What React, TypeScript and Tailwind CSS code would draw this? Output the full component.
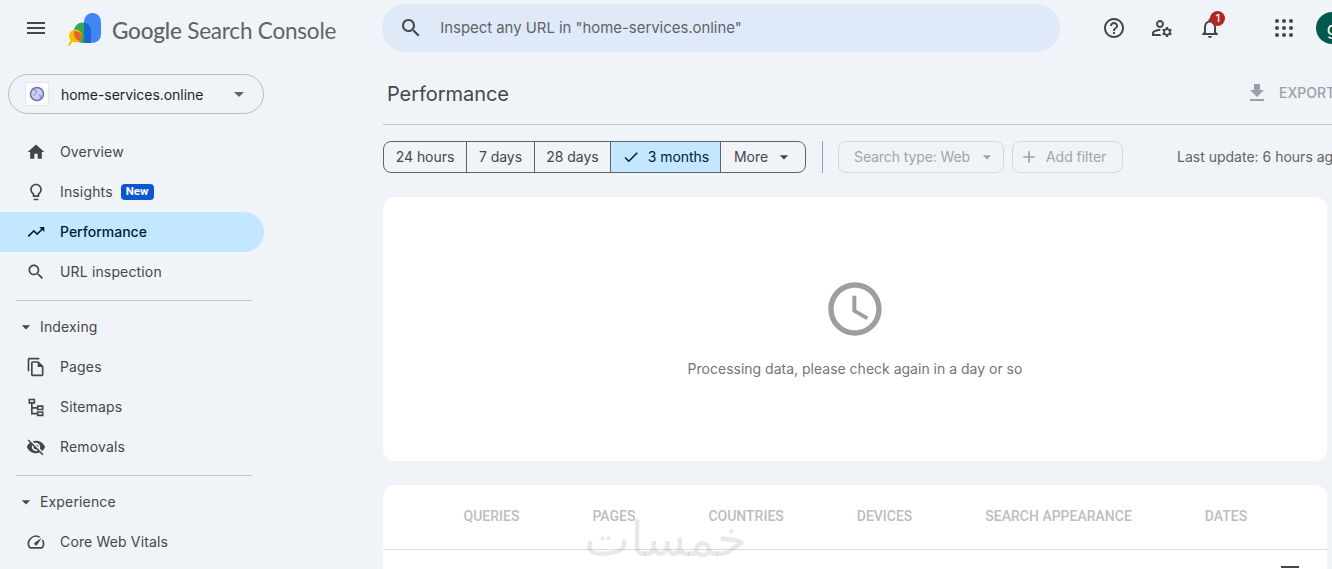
import React from "react";

const P = {
  menu: "M3 18h18v-2H3v2zm0-5h18v-2H3v2zm0-7v2h18V6H3z",
  help: "M11 18h2v-2h-2v2zm1-16C6.48 2 2 6.48 2 12s4.48 10 10 10 10-4.48 10-10S17.52 2 12 2zm0 18c-4.41 0-8-3.59-8-8s3.59-8 8-8 8 3.59 8 8-3.59 8-8 8zm0-14c-2.21 0-4 1.79-4 4h2c0-1.1.9-2 2-2s2 .9 2 2c0 2-3 1.75-3 5h2c0-2.25 3-2.5 3-5 0-2.21-1.79-4-4-4z",
  manage: "M4,18v-0.65c0-0.34,0.16-0.66,0.41-0.81C6.1,15.53,8.03,15,10,15c0.03,0,0.05,0,0.08,0.01c0.1-0.7,0.3-1.37,0.59-1.98 C10.45,13.01,10.23,13,10,13c-2.42,0-4.68,0.67-6.61,1.82C2.51,15.34,2,16.32,2,17.35V20h9.26c-0.42-0.6-0.75-1.28-0.97-2H4z M10,12c2.21,0,4-1.79,4-4s-1.79-4-4-4C7.79,4,6,5.79,6,8S7.79,12,10,12z M10,6c1.1,0,2,0.9,2,2s-0.9,2-2,2 c-1.1,0-2-0.9-2-2S8.9,6,10,6z M20.75,16c0-0.22-0.03-0.42-0.06-0.63l1.14-1.01l-1-1.73l-1.45,0.49c-0.32-0.27-0.68-0.48-1.08-0.63L18,11h-2l-0.3,1.49c-0.4,0.15-0.76,0.36-1.08,0.63l-1.45-0.49l-1,1.73l1.14,1.01c-0.03,0.21-0.06,0.41-0.06,0.63s0.03,0.42,0.06,0.63l-1.14,1.01l1,1.73l1.45-0.49c0.32,0.27,0.68,0.48,1.08,0.63L16,21h2l0.3-1.49c0.4-0.15,0.76-0.36,1.08-0.63l1.45,0.49l1-1.73l-1.14-1.01C20.72,16.42,20.75,16.22,20.75,16z M17,18c-1.1,0-2-0.9-2-2s0.9-2,2-2s2,0.9,2,2S18.1,18,17,18z",
  bell: "M12 22c1.1 0 2-.9 2-2h-4c0 1.1.9 2 2 2zm6-6v-5c0-3.07-1.63-5.64-4.5-6.32V4c0-.83-.67-1.5-1.5-1.5s-1.5.67-1.5 1.5v.68C7.64 5.36 6 7.92 6 11v5l-2 2v1h16v-1l-2-2zm-2 1H8v-6c0-2.48 1.51-4.5 4-4.5s4 2.02 4 4.5v6z",
  search: "M15.5 14h-.79l-.28-.27C15.41 12.59 16 11.11 16 9.5 16 5.91 13.09 3 9.5 3S3 5.91 3 9.5 5.91 16 9.5 16c1.61 0 3.09-.59 4.23-1.57l.27.28v.79l5 4.99L20.49 19l-4.99-5zm-6 0C7.01 14 5 11.99 5 9.5S7.01 5 9.5 5 14 7.01 14 9.5 11.99 14 9.5 14z",
  home: "M10 20v-6h4v6h5v-8h3L12 3 2 12h3v8z",
  bulb: "M9 21c0 .55.45 1 1 1h4c.55 0 1-.45 1-1v-1H9v1zm3-19C8.14 2 5 5.14 5 9c0 2.38 1.19 4.47 3 5.74V17c0 .55.45 1 1 1h6c.55 0 1-.45 1-1v-2.26c1.81-1.27 3-3.36 3-5.74 0-3.86-3.14-7-7-7zm2.85 11.1l-.85.6V16h-4v-2.3l-.85-.6C7.8 12.16 7 10.63 7 9c0-2.76 2.24-5 5-5s5 2.24 5 5c0 1.63-.8 3.16-2.15 4.1z",
  trend: "M16 6l2.29 2.29-4.88 4.88-4-4L2 16.59 3.41 18l6-6 4 4 6.3-6.29L22 12V6z",
  pages: "M16 1H4c-1.1 0-2 .9-2 2v14h2V3h12V1zm-1 4H8c-1.1 0-1.99.9-1.99 2L6 21c0 1.1.89 2 1.99 2H19c1.1 0 2-.9 2-2V11l-6-6zM8 21V7h6v5h5v9H8z",
  sitemap: "M3 2h8v6H8v4h5v-2h8v6h-8v-2H8v5h5v-2h8v6h-8v-2H6V8H3V2zm2 2v2h4V4H5zm10 8v2h4v-2h-4zm0 7v2h4v-2h-4z",
  eyeoff: "M12 7c2.76 0 5 2.24 5 5 0 .65-.13 1.26-.36 1.83l2.92 2.92c1.51-1.26 2.7-2.89 3.43-4.75-1.73-4.39-6-7.5-11-7.5-1.4 0-2.74.25-3.98.7l2.16 2.16C10.74 7.13 11.35 7 12 7zM2 4.27l2.28 2.28.46.46C3.08 8.3 1.78 10.02 1 12c1.73 4.39 6 7.5 11 7.5 1.55 0 3.03-.3 4.38-.84l.42.42L19.73 22 21 20.73 3.27 3 2 4.27zM7.53 9.8l1.55 1.55c-.05.21-.08.43-.08.65 0 1.66 1.34 3 3 3 .22 0 .44-.03.65-.08l1.55 1.55c-.67.33-1.41.53-2.2.53-2.76 0-5-2.24-5-5 0-.79.2-1.53.53-2.2zm4.31-.78l3.15 3.15.02-.16c0-1.66-1.34-3-3-3l-.17.01z",
  speed: "M20.38 8.57l-1.23 1.85a8 8 0 0 1-.22 7.58H5.07A8 8 0 0 1 15.58 6.85l1.85-1.23A10 10 0 0 0 3.35 19a2 2 0 0 0 1.72 1h13.85a2 2 0 0 0 1.74-1 10 10 0 0 0-.27-10.44zm-9.79 6.84a2 2 0 0 0 2.83 0l5.66-8.49-8.49 5.66a2 2 0 0 0 0 2.83z",
  download: "M19 9h-4V3H9v6H5l7 7 7-7zM5 18v2h14v-2H5z",
  check: "M9 16.17L4.83 12l-1.41 1.41L9 19 21 7l-1.41-1.41z",
  add: "M19 13h-6v6h-2v-6H5v-2h6V5h2v6h6v2z",
  clock: "M11.99 2C6.47 2 2 6.48 2 12s4.47 10 9.99 10C17.52 22 22 17.52 22 12S17.52 2 11.99 2zM12 20c-4.42 0-8-3.58-8-8s3.58-8 8-8 8 3.58 8 8-3.58 8-8 8zm.5-13H11v6l5.25 3.15.75-1.23-4.5-2.67z",
  filter: "M10 18h4v-2h-4v2zM3 6v2h18V6H3zm3 7h12v-2H6v2z",
  arrow: "M7 10l5 5 5-5z",
};

function Icon({ d, className }: { d: string; className?: string }) {
  return (
    <svg viewBox="0 0 24 24" fill="currentColor" className={className}>
      <path d={d} />
    </svg>
  );
}

function NavItem({ icon, label, active, badge }: { icon: string; label: string; active?: boolean; badge?: boolean }) {
  return (
    <div
      className={`flex h-10 w-[264px] items-center pl-[26px] rounded-r-[20px] ${
        active ? "bg-[#c2e7ff] text-[#001d35]" : "text-[#444746]"
      }`}
    >
      <Icon d={icon} className="h-5 w-5" />
      <span className={`ml-[14px] pb-[2px] text-[14px] ${active ? "font-medium" : "tracking-[0.15px]"}`}>{label}</span>
      {badge && (
        <span className="ml-2 flex h-4 items-center rounded-[4px] bg-[#0b57d0] px-[5px] text-[11.500px] font-bold text-white font-['Roboto',sans-serif]">
          New
        </span>
      )}
    </div>
  );
}

function Section({ label }: { label: string }) {
  return (
    <div className="flex h-10 items-center pl-[16px] text-[#444746]">
      <Icon d={P.arrow} className="h-5 w-5" />
      <span className="ml-1 pb-[2px] text-[14px] tracking-[0.15px]">{label}</span>
    </div>
  );
}

function Logo() {
  return (
    <svg viewBox="0 0 36 36" className="h-9 w-9">
      <rect x="16" y="1" width="17" height="30" rx="8.5" fill="#4285f4" />
      <path d="M6 19a8.5 8.5 0 0 1 17 0v12H14.5A8.5 8.5 0 0 1 6 22.5z" fill="#34a853" />
      <path d="M16 10.4a8.5 8.5 0 0 1 7 8.6v12h-7z" fill="#1967d2" />
      <circle cx="7.5" cy="24" r="6.5" fill="#fbbc04" />
      <path d="M6 19.500a8.500 8.500 0 0 0 .1 3A8.500 8.500 0 0 0 11 29a6.500 6.500 0 0 0 3-5 6.500 6.500 0 0 0-8-4.500z" fill="#e8622c" />
      <path d="M2.800 28 L4.500 29.500 L2 33.500 L0.200 33.800 L0.300 32z" fill="#fbbc04" />
    </svg>
  );
}

function Top() {
  return (
    <div className="flex h-14 w-[1360px] shrink-0 items-center">
      <Icon d={P.menu} className="ml-6 h-6 w-6 text-[#444746]" />
      <div className="ml-[20px] mt-[3px]"><Logo /></div>
      <span className="ml-[8px] mt-[6px] whitespace-nowrap text-[22.500px] text-[#5f6368] tracking-[-0.2px] font-['Lato',sans-serif]">
        <span className="font-medium">Google</span> Search Console
      </span>
      <div className="ml-[46px] flex h-12 w-[678px] items-center rounded-3xl bg-[#dfe9f8]">
        <Icon d={P.search} className="ml-[17px] h-6 w-6 text-[#444746]" />
        <span className="ml-[17px] text-[14.900px] text-[#5f6368]">Inspect any URL in "home-services.online"</span>
      </div>
      <Icon d={P.help} className="ml-[42px] h-6 w-6 text-[#444746]" />
      <Icon d={P.manage} className="ml-6 h-6 w-6 text-[#444746]" />
      <div className="relative ml-6 h-6 w-6">
        <Icon d={P.bell} className="h-6 w-6 text-[#444746]" />
        <span className="absolute -right-[3px] -top-[5px] flex h-[15px] w-[15px] items-center justify-center rounded-full bg-[#b3261e] text-[11px] font-medium text-white">
          1
        </span>
      </div>
      <svg viewBox="0 0 24 24" fill="#444746" className="ml-[50px] h-6 w-6">
        {[5, 12, 19].flatMap((y) =>
          [5, 12, 19].map((x) => <circle key={`${x}-${y}`} cx={x} cy={y} r="2" />)
        )}
      </svg>
      <div className="ml-5 flex h-8 w-8 shrink-0 items-center justify-center rounded-full bg-[#00594a] text-[18px] text-white">
        g
      </div>
    </div>
  );
}

function Sidebar() {
  return (
    <aside className="w-[383px] shrink-0">
      <div className="ml-2 mt-[18px] flex h-10 w-[256px] items-center rounded-[20px] border border-[#b9bdc1] pl-4">
        <div className="flex h-[24px] w-[24px] items-center justify-center border border-[#e3e6ea] bg-white">
          <svg viewBox="0 0 16 16" className="h-4 w-4">
            <circle cx="8" cy="8" r="6.500" fill="#c9d0ee" stroke="#6d72b8" strokeWidth="1.500" />
            <path d="M5 4c2 0 3 1 2.500 2.500S5 8 5 9.500M10 9c1.500 0 2 1 1 3" stroke="#6d72b8" strokeWidth="1" fill="none" />
          </svg>
        </div>
        <span className="ml-3 text-[14px] tracking-[-0.05px] text-[#1f1f1f]">home-services.online</span>
        <Icon d={P.arrow} className="ml-auto mr-3 h-6 w-6 text-[#5f6368]" />
      </div>
      <div className="mt-[18px]">
        <NavItem icon={P.home} label="Overview" />
        <NavItem icon={P.bulb} label="Insights" badge />
        <NavItem icon={P.trend} label="Performance" active />
        <NavItem icon={P.search} label="URL inspection" />
      </div>
      <div className="mx-4 mt-2 h-px w-[236px] bg-[#c4c7c9]" />
      <div className="mt-[6px]">
        <Section label="Indexing" />
        <NavItem icon={P.pages} label="Pages" />
        <NavItem icon={P.sitemap} label="Sitemaps" />
        <NavItem icon={P.eyeoff} label="Removals" />
      </div>
      <div className="mx-4 mt-2 h-px w-[236px] bg-[#c4c7c9]" />
      <div className="mt-[6px]">
        <Section label="Experience" />
        <NavItem icon={P.speed} label="Core Web Vitals" />
      </div>
    </aside>
  );
}

function Segment({ label, width, active, more }: { label: string; width: string; active?: boolean; more?: boolean }) {
  return (
    <div
      className={`flex h-full items-center justify-center whitespace-nowrap border-r border-[#5f6368] pb-[2px] last:border-r-0 text-[14px] tracking-[-0.05px] ${width} ${
        active ? "bg-[#c2e7ff] text-[#001d35]" : "text-[#444746]"
      }`}
    >
      {active && <Icon d={P.check} className="mr-2 mt-[2px] h-[18px] w-[18px]" />}
      {label}
      {more && <Icon d={P.arrow} className="ml-[6px] mt-[2px] -mr-[2px] h-5 w-5" />}
    </div>
  );
}

function Main() {
  const tabs = ["QUERIES", "PAGES", "COUNTRIES", "DEVICES", "SEARCH APPEARANCE", "DATES"];
  return (
    <main className="w-[960px] shrink-0">
      <div className="flex h-[69px] items-center justify-between border-b border-[#c4c7c9] pl-1 pt-[5px]">
        <h1 className="mt-[2px] text-[20px] tracking-[-0.05px] text-[#444746]">Performance</h1>
        <div className="flex w-[98px] shrink-0 items-center text-[#9aa0a6]">
          <Icon d={P.download} className="h-6 w-6" />
          <span className="ml-[10px] text-[14px] font-medium">EXPORT</span>
        </div>
      </div>
      <div className="mt-4 flex h-8 items-center whitespace-nowrap">
        <div className="flex h-8 items-center overflow-hidden rounded-lg border border-[#5f6368]">
          <Segment label="24 hours" width="w-[83px]" />
          <Segment label="7 days" width="w-[68px]" />
          <Segment label="28 days" width="w-[76px]" />
          <Segment label="3 months" width="w-[110px]" active />
          <Segment label="More" width="w-[84px]" more />
        </div>
        <div className="ml-4 h-8 w-px bg-[#9aa0a6]" />
        <div className="ml-[15px] flex h-8 w-[166px] items-center rounded-lg border border-[#d3d7dc] pl-[15px] text-[14px] tracking-[-0.1px] text-[#a0a4a8]">
          <span className="pb-[2px]">Search type: Web</span>
          <Icon d={P.arrow} className="ml-auto mr-[6px] h-5 w-5" />
        </div>
        <div className="ml-2 flex h-8 w-[111px] items-center rounded-lg border border-[#d3d7dc] pl-[6px] text-[14px] tracking-[-0.05px] text-[#a0a4a8]">
          <Icon d={P.add} className="h-5 w-5" />
          <span className="ml-[7px] pb-[2px]">Add filter</span>
        </div>
        <span className="ml-[54px] pb-[2px] text-[14px] text-[#5f6368]">Last update: 6 hours ago</span>
      </div>
      <section className="mt-6 flex h-[264px] w-[944px] flex-col items-center rounded-xl bg-white pt-[80px]">
        <Icon d={P.clock} className="h-[64px] w-[64px] text-[#9e9e9e]" />
        <p className="mt-[17px] text-[14px] text-[#757575]">Processing data, please check again in a day or so</p>
      </section>
      <section className="relative mt-6 h-[200px] w-[944px] rounded-t-xl bg-white">
        <div className="flex h-[65px] items-center border-b border-[#dadce0] pb-[2px] pl-[44px] font-['Roboto',sans-serif]">
          {tabs.map((t) => (
            <span key={t} className="px-[36.500px] text-[14px] font-medium whitespace-nowrap text-[#bdbdbd]">
              {t}
            </span>
          ))}
        </div>
        <Icon d={P.filter} className="absolute right-[25px] top-[75px] h-6 w-6 text-[#444746]" />
        <span
          dir="rtl"
          className="absolute left-[201px] top-[20px] text-[49px] leading-[70px] text-black/[0.09] font-['DejaVu_Sans',sans-serif]"
        >
          خمسات
        </span>
      </section>
    </main>
  );
}

export default function App() {
  return (
    <div className="h-[569px] w-[1332px] overflow-hidden bg-[#f0f4f9] font-['Inter',sans-serif]">
      <Top />
      <div className="flex">
        <Sidebar />
        <Main />
      </div>
    </div>
  );
}
